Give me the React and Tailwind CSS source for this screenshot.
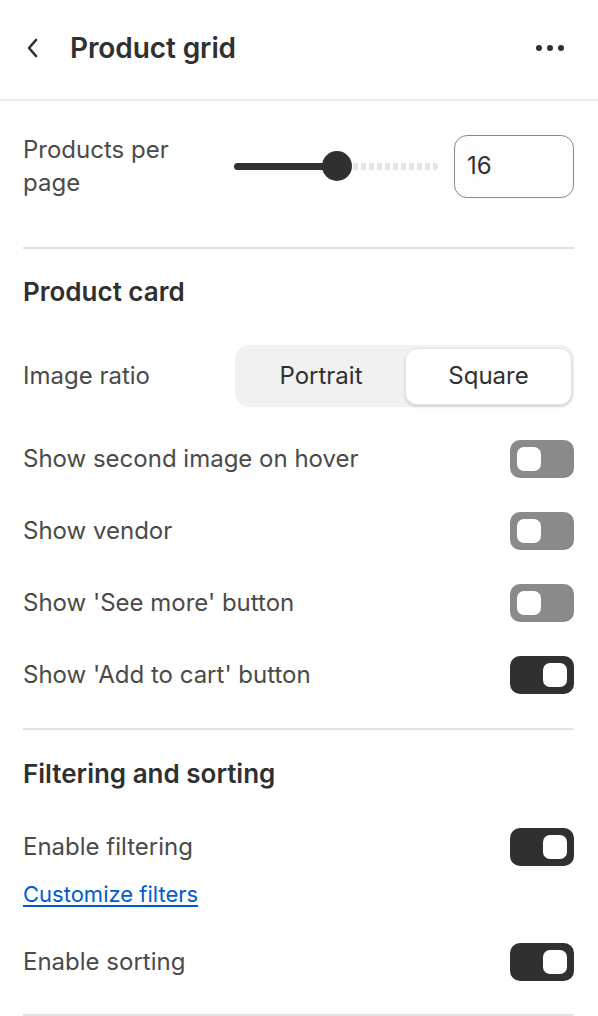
import React from "react";

const Toggle = ({ on }) => (
  <div
    className={`flex h-[38px] w-[64px] items-center rounded-[10px] px-[7px] ${
      on ? "justify-end bg-[#303030]" : "justify-start bg-[#8a8a8a]"
    }`}
  >
    <div className="h-[24px] w-[24px] rounded-[7px] bg-white" />
  </div>
);

const ToggleRow = ({ label, on }) => (
  <div className="flex h-[40px] items-center justify-between">
    <span className="text-[24px] leading-[30px] text-[#4a4a4a]">{label}</span>
    <Toggle on={on} />
  </div>
);

export default function App() {
  return (
    <div className="min-h-[1016px] bg-white font-['Inter',sans-serif] text-[#303030]">
      {/* Header */}
      <div className="flex h-[101px] items-center border-b-2 border-[#ebebeb] pb-[3px] pl-[26px] pr-[34px]">
        <svg width="14" height="22" viewBox="0 0 14 22" className="mr-[30px]">
          <polyline
            points="10,3 3,11 10,19"
            fill="none"
            stroke="#303030"
            strokeWidth="2.6"
            strokeLinecap="round"
            strokeLinejoin="round"
          />
        </svg>
        <h1 className="flex-1 text-[28px] font-semibold leading-[36px] tracking-[-0.1px]">Product grid</h1>
        <div className="flex gap-[5px]">
          <span className="h-[6px] w-[6px] rounded-full bg-[#303030]" />
          <span className="h-[6px] w-[6px] rounded-full bg-[#303030]" />
          <span className="h-[6px] w-[6px] rounded-full bg-[#303030]" />
        </div>
      </div>

      <div className="px-[23px] pr-[24px]">
        {/* Products per page */}
        <div className="flex items-center pt-[32px] pb-[48px] border-b-2 border-[#e3e3e3]">
          <div className="w-[211px] text-[24px] leading-[33px] text-[#4a4a4a]">
            Products per
            <br />
            page
          </div>
          <div className="relative flex h-[32px] w-[204px] items-center">
            <div className="h-[7px] w-[103px] rounded-l-full bg-[#303030]" />
            <div className="h-[7px] flex-1 rounded-r-full bg-[repeating-linear-gradient(90deg,#e3e3e3_0_5px,transparent_5px_8px)]" />
            <div className="absolute left-[88px] top-[1px] h-[30px] w-[30px] rounded-full bg-[#303030]" />
          </div>
          <div className="ml-auto flex h-[63px] w-[120px] items-center rounded-[13px] border border-[#8a8a8a] bg-[#fdfdfd] pl-[12px] text-[24px] text-[#303030]">
            16
          </div>
        </div>

        {/* Product card */}
        <div className="border-b-2 border-[#e3e3e3] pt-[28px] pb-[33px]">
          <h2 className="text-[26px] font-semibold leading-[30px]">Product card</h2>
          <div className="mt-[38px] flex items-center justify-between">
            <span className="text-[24px] leading-[30px] text-[#4a4a4a]">Image ratio</span>
            <div className="flex h-[62px] w-[339px] items-center rounded-[14px] bg-[#f1f1f1] p-[2px]">
              <div className="flex flex-1 items-center justify-center text-[24px] text-[#303030]">
                Portrait
              </div>
              <div className="flex h-[57px] w-[167px] items-center justify-center rounded-[12px] border border-[#e3e3e3] bg-white text-[24px] text-[#303030] shadow-[0_2px_3px_rgba(0,0,0,0.12)]">
                Square
              </div>
            </div>
          </div>
          <div className="mt-[32px] flex flex-col gap-[32px]">
            <ToggleRow label="Show second image on hover" />
            <ToggleRow label="Show vendor" />
            <ToggleRow label="Show 'See more' button" />
            <ToggleRow label="Show 'Add to cart' button" on />
          </div>
        </div>

        {/* Filtering and sorting */}
        <div className="border-b-2 border-[#e3e3e3] pt-[29px] pb-[32px]">
          <h2 className="text-[26px] font-semibold leading-[30px]">Filtering and sorting</h2>
          <div className="mt-[38px]">
            <ToggleRow label="Enable filtering" on />
          </div>
          <a href="#" className="mt-[12px] block text-[22px] leading-[30px] text-[#005bd3] underline underline-offset-[3px]">
            Customize filters
          </a>
          <div className="mt-[33px]">
            <ToggleRow label="Enable sorting" on />
          </div>
        </div>
      </div>
    </div>
  );
}
